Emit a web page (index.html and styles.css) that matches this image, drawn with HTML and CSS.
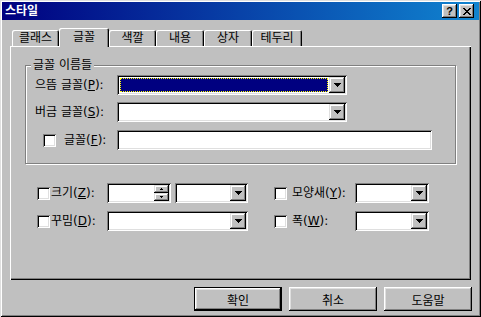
FILE: index.html
```html
<!DOCTYPE html>
<html lang="ko">
<head>
    <meta charset="UTF-8">
    <title>스타일</title>
    <link rel="stylesheet" href="styles.css">
</head>
<body>
    <div class="window">
        <div class="titlebar">
            <span class="title">스타일</span>
            <div class="title-buttons">
                <span class="tbtn">?</span>
                <span class="tbtn">
                    <svg width="8" height="7" viewBox="0 0 8 7"><path d="M0 0h2v1h1v1h2v-1h1v-1h2v1h-1v1h-1v1h-1v1h1v1h1v1h1v1h-2v-1h-1v-1h-2v1h-1v1h-2v-1h1v-1h1v-1h1v-1h-1v-1h-1v-1h-1z"/></svg>
                </span>
            </div>
        </div>

        <div class="tabs">
            <div class="tab w47">클래스</div>
            <div class="tab active w50">글꼴</div>
            <div class="tab w47">색깔</div>
            <div class="tab w48">내용</div>
            <div class="tab w48">상자</div>
            <div class="tab w50">테두리</div>
        </div>

        <div class="panel">
            <div class="group">
                <div class="group-title">글꼴 이름들</div>
                <div class="row r1">
                    <span class="lbl">으뜸 글꼴(<u>P</u>):</span>
                    <div class="combo focus w230">
                        <span class="value"></span>
                        <span class="drop"><svg width="7" height="4"><path d="M0 0h7v1h-1v1h-1v1h-1v1h-1v-1h-1v-1h-1v-1h-1z"/></svg></span>
                    </div>
                </div>
                <div class="row r2">
                    <span class="lbl">버금 글꼴(<u>S</u>):</span>
                    <div class="combo w230">
                        <span class="value"></span>
                        <span class="drop"><svg width="7" height="4"><path d="M0 0h7v1h-1v1h-1v1h-1v1h-1v-1h-1v-1h-1v-1h-1z"/></svg></span>
                    </div>
                </div>
                <div class="row r3">
                    <span class="chk"></span>
                    <span class="lbl short">글꼴(<u>F</u>):</span>
                    <div class="textbox"></div>
                </div>
            </div>

            <div class="attrs">
                <div class="cell"><span class="chk"></span><span>크기(<u>Z</u>):</span></div>
                <div class="pair">
                    <div class="spin">
                        <div class="spin-btns">
                            <span class="sbtn"><svg width="3" height="2"><path d="M1 0h1v1h1v1h-3v-1h1z"/></svg></span>
                            <span class="sbtn"><svg width="3" height="2"><path d="M0 0h3v1h-1v1h-1v-1h-1z"/></svg></span>
                        </div>
                    </div>
                    <div class="combo w73">
                        <span class="value"></span>
                        <span class="drop"><svg width="7" height="4"><path d="M0 0h7v1h-1v1h-1v1h-1v1h-1v-1h-1v-1h-1v-1h-1z"/></svg></span>
                    </div>
                </div>
                <div></div>
                <div class="cell wide"><span class="chk"></span><span>모양새(<u>Y</u>):</span></div>
                <div class="combo">
                    <span class="value"></span>
                    <span class="drop"><svg width="7" height="4"><path d="M0 0h7v1h-1v1h-1v1h-1v1h-1v-1h-1v-1h-1v-1h-1z"/></svg></span>
                </div>

                <div class="cell"><span class="chk"></span><span>꾸밈(<u>D</u>):</span></div>
                <div class="combo">
                    <span class="value"></span>
                    <span class="drop"><svg width="7" height="4"><path d="M0 0h7v1h-1v1h-1v1h-1v1h-1v-1h-1v-1h-1v-1h-1z"/></svg></span>
                </div>
                <div></div>
                <div class="cell wide"><span class="chk"></span><span>폭(<u>W</u>):</span></div>
                <div class="combo">
                    <span class="value"></span>
                    <span class="drop"><svg width="7" height="4"><path d="M0 0h7v1h-1v1h-1v1h-1v1h-1v-1h-1v-1h-1v-1h-1z"/></svg></span>
                </div>
            </div>
        </div>

        <div class="buttons">
            <button class="btn default">확인</button>
            <button class="btn">취소</button>
            <button class="btn">도움말</button>
        </div>
    </div>
</body>
</html>
```

FILE: styles.css
```css
body {
    margin: 0;
    background-color: #c0c0c0;
    font-family: "DejaVu Sans", "Noto Sans CJK KR", sans-serif;
    font-size: 12px;
    color: #000;
}
u {
    text-decoration-thickness: 1px;
}
.window {
    width: 481px;
    height: 317px;
    box-sizing: border-box;
    padding: 2px;
    background-color: #c0c0c0;
    box-shadow: inset 1px 1px #dfdfdf, inset -1px -1px #000, inset 2px 2px #fff, inset -2px -2px #808080;
}

/* title bar */
.titlebar {
    height: 18px;
    display: flex;
    align-items: center;
    padding-left: 3px;
    background: linear-gradient(to right, #000080, #1084d0);
    color: #fff;
    font-weight: bold;
    line-height: 18px;
}
.title-buttons {
    margin-left: auto;
    margin-right: 5px;
    display: flex;
    gap: 2px;
}
.tbtn {
    width: 15px;
    height: 14px;
    display: flex;
    align-items: center;
    justify-content: center;
    background-color: #c0c0c0;
    box-shadow: inset -1px -1px #000, inset 1px 1px #fff, inset -2px -2px #808080, inset 2px 2px #dfdfdf;
    color: #000;
    font: bold 11px "Liberation Sans", sans-serif;
}

/* tabs */
.tabs {
    height: 26px;
    display: flex;
    align-items: flex-end;
    padding-left: 10px;
}
.tab {
    height: 16px;
    box-sizing: border-box;
    display: flex;
    align-items: center;
    justify-content: center;
    border-radius: 2px 2px 0 0;
    box-shadow: inset 1px 1px #fff, inset -1px 0 #000, inset -2px 0 #808080;
    line-height: 14px;
}
.tab.active {
    height: 19px;
    margin-bottom: -1px;
    padding-bottom: 1px;
    position: relative;
    z-index: 1;
    background-color: #c0c0c0;
}
.w47 { width: 47px; }
.w48 { width: 48px; }
.w50 { width: 50px; }

/* tab page */
.panel {
    margin-left: 8px;
    width: 461px;
    height: 234px;
    box-sizing: border-box;
    padding: 19px 0 0 15px;
    box-shadow: inset 1px 1px #fff, inset -1px -1px #000, inset -2px -2px #808080;
}
.group {
    width: 431px;
    height: 99px;
    box-sizing: border-box;
    border: 1px solid #808080;
    box-shadow: inset 1px 1px #fff, 1px 1px #fff;
}
.group-title {
    width: max-content;
    margin: -8px 0 0 5px;
    padding: 0 2px;
    background-color: #c0c0c0;
    line-height: 14px;
}
.row {
    height: 20px;
    display: flex;
    align-items: center;
    padding-left: 9px;
}
.r1 { margin-top: 3px; }
.r2 { margin-top: 7px; }
.r3 { margin-top: 8px; padding-left: 17px; }
.lbl {
    width: 82px;
    line-height: 14px;
}
.lbl.short {
    width: 53px;
    margin-left: 8px;
}

/* fields */
.combo,
.textbox,
.spin {
    height: 20px;
    box-sizing: border-box;
    padding: 2px;
    display: flex;
    background-color: #fff;
    box-shadow: inset 1px 1px #808080, inset -1px -1px #fff, inset 2px 2px #000, inset -2px -2px #dfdfdf;
}
.combo .value {
    flex: 1;
    margin: 1px;
}
.combo.focus .value {
    background-color: #000080;
    outline: 1px dotted #ffff00;
    outline-offset: -1px;
}
.w230 { width: 230px; }
.w73 { width: 73px; }
.textbox { width: 315px; }
.drop,
.sbtn {
    display: flex;
    align-items: center;
    justify-content: center;
    background-color: #c0c0c0;
    box-shadow: inset -1px -1px #000, inset 1px 1px #dfdfdf, inset -2px -2px #808080, inset 2px 2px #fff;
}
.drop {
    width: 16px;
    height: 16px;
}
.spin {
    width: 64px;
    justify-content: flex-end;
}
.spin-btns {
    display: flex;
    flex-direction: column;
}
.sbtn {
    width: 15px;
    height: 8px;
}
.chk {
    width: 13px;
    height: 13px;
    flex: none;
    background-color: #fff;
    box-shadow: inset 1px 1px #808080, inset -1px -1px #fff, inset 2px 2px #000, inset -2px -2px #dfdfdf;
}

/* lower options */
.attrs {
    display: grid;
    grid-template-columns: 70px 141px 26px 81px 74px;
    grid-template-rows: 20px 20px;
    row-gap: 8px;
    margin: 19px 0 0 12px;
}
.cell {
    display: flex;
    align-items: center;
    line-height: 14px;
}
.cell .chk {
    margin-right: 1px;
}
.cell.wide .chk {
    margin-right: 5px;
}
.pair {
    display: flex;
    gap: 4px;
}

/* dialog buttons */
.buttons {
    display: flex;
    justify-content: flex-end;
    gap: 7px;
    margin-top: 7px;
    padding-right: 7px;
}
.btn {
    width: 88px;
    height: 24px;
    padding: 0;
    border: none;
    background-color: #c0c0c0;
    font-family: "DejaVu Sans", "Noto Sans CJK KR", sans-serif;
    font-size: 12px;
    color: #000;
    box-shadow: inset -1px -1px #000, inset 1px 1px #fff, inset -2px -2px #808080, inset 2px 2px #dfdfdf;
}
.btn.default {
    box-shadow: inset 0 0 0 1px #000, inset -2px -2px #000, inset 2px 2px #fff, inset -3px -3px #808080, inset 3px 3px #dfdfdf;
}
```
